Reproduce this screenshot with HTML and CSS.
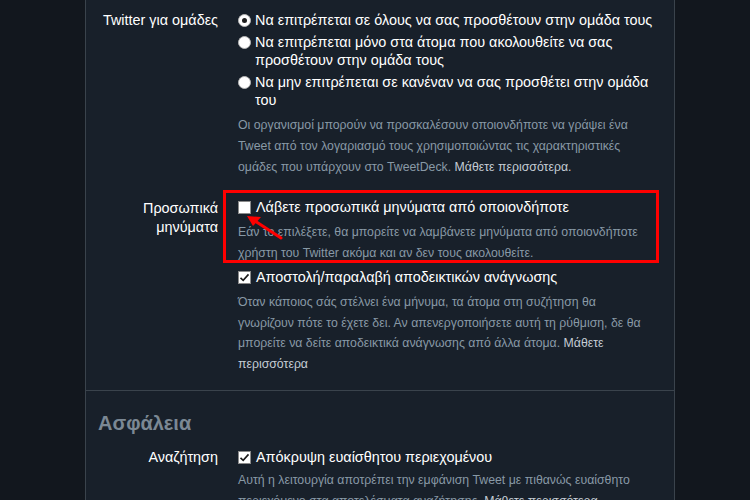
FILE: index.html
```html
<!DOCTYPE html>
<html lang="el">
<head>
<meta charset="utf-8">
<link rel="stylesheet" href="styles.css">
</head>
<body>
<div class="panel">
  <section class="sec first">
    <div class="row">
      <div class="label">Twitter για ομάδες</div>
      <div class="ctrl">
        <div class="opt"><span class="radio on"></span><span class="txt">Να επιτρέπεται σε όλους να σας προσθέτουν στην ομάδα τους</span></div>
        <div class="opt"><span class="radio"></span><span class="txt">Να επιτρέπεται μόνο στα άτομα που ακολουθείτε να σας<br>προσθέτουν στην ομάδα τους</span></div>
        <div class="opt"><span class="radio"></span><span class="txt">Να μην επιτρέπεται σε κανέναν να σας προσθέτει στην ομάδα<br>του</span></div>
        <p class="desc">Οι οργανισμοί μπορούν να προσκαλέσουν οποιονδήποτε να γράψει ένα<br>Tweet από τον λογαριασμό τους χρησιμοποιώντας τις χαρακτηριστικές<br>ομάδες που υπάρχουν στο TweetDeck. <span class="link">Μάθετε περισσότερα.</span></p>
      </div>
    </div>
    <div class="row last">
      <div class="label two">Προσωπικά<br>μηνύματα</div>
      <div class="ctrl">
        <div class="hl">
          <div class="opt"><span class="check"></span><span class="txt">Λάβετε προσωπικά μηνύματα από οποιονδήποτε</span></div>
          <p class="desc">Εάν το επιλέξετε, θα μπορείτε να λαμβάνετε μηνύματα από οποιονδήποτε<br>χρήστη του Twitter ακόμα και αν δεν τους ακολουθείτε.</p>
          <svg class="arrow" width="50" height="40" viewBox="0 0 50 40"><path d="M42 30 L16 13" stroke="#ff0000" stroke-width="3" stroke-linecap="round"/><path d="M8 8 L22 9 L14 18 Z" fill="#ff0000"/></svg>
        </div>
        <div class="opt"><span class="check on"><svg viewBox="0 0 13 13" width="13" height="13"><path d="M2.5 6.8 L5.2 9.4 L10.5 3.4" fill="none" stroke="#1b1b1b" stroke-width="1.6"/></svg></span><span class="txt">Αποστολή/παραλαβή αποδεικτικών ανάγνωσης</span></div>
        <p class="desc tall">Όταν κάποιος σάς στέλνει ένα μήνυμα, τα άτομα στη συζήτηση θα<br>γνωρίζουν πότε το έχετε δει. Αν απενεργοποιήσετε αυτή τη ρύθμιση, δε θα<br>μπορείτε να δείτε αποδεικτικά ανάγνωσης από άλλα άτομα. <span class="link">Μάθετε<br>περισσότερα</span></p>
      </div>
    </div>
  </section>
  <section class="sec">
    <h2 class="head">Ασφάλεια</h2>
    <div class="row">
      <div class="label">Αναζήτηση</div>
      <div class="ctrl">
        <div class="opt"><span class="check on"><svg viewBox="0 0 13 13" width="13" height="13"><path d="M2.5 6.8 L5.2 9.4 L10.5 3.4" fill="none" stroke="#1b1b1b" stroke-width="1.6"/></svg></span><span class="txt">Απόκρυψη ευαίσθητου περιεχομένου</span></div>
        <p class="desc tight">Αυτή η λειτουργία αποτρέπει την εμφάνιση Tweet με πιθανώς ευαίσθητο<br>περιεχόμενο στα αποτελέσματα αναζήτησης. <span class="link">Μάθετε περισσότερα</span></p>
      </div>
    </div>
  </section>
</div>
</body>
</html>
```

FILE: styles.css
```css
html, body {
  margin: 0;
  padding: 0;
  background: #12171e;
  height: 100%;
  overflow: hidden;
}
body {
  font-family: "Liberation Sans", "Noto Sans", sans-serif;
  color: #ffffff;
}
.panel {
  margin-left: 85px;
  width: 588px;
  min-height: 100%;
  background: #18202a;
  border-left: 1px solid #3a434c;
  border-right: 1px solid #3a434c;
}
.sec {
  padding: 0 0 12px 0;
}
.sec.first {
  padding-top: 11px;
  padding-bottom: 15px;
  border-bottom: 1px solid #3a434c;
}
.row {
  display: grid;
  grid-template-columns: 132px 1fr;
  column-gap: 20px;
  margin-bottom: 18px;
}
.row.last {
  margin-bottom: 0;
}
.label {
  text-align: right;
  font-size: 14.4px;
  line-height: 18px;
  white-space: nowrap;
}
.label.two {
  line-height: 19px;
  padding-top: 3px;
}
.ctrl {
  min-width: 0;
}
.opt {
  display: flex;
  align-items: flex-start;
  font-size: 14.4px;
  line-height: 18px;
  margin-bottom: 4px;
  white-space: nowrap;
}
.radio {
  flex: none;
  width: 13px;
  height: 13px;
  border-radius: 50%;
  background: #ffffff;
  margin: 3px 4px 0 0;
  box-sizing: border-box;
  border: 1px solid #b8b8b8;
  position: relative;
}
.radio.on::after {
  content: "";
  position: absolute;
  left: 3px;
  top: 3px;
  width: 5px;
  height: 5px;
  border-radius: 50%;
  background: #1f1f1f;
}
.check {
  flex: none;
  width: 13px;
  height: 13px;
  background: #ffffff;
  border: 1px solid #8a8a8a;
  box-sizing: border-box;
  margin: 3px 5px 0 0;
  position: relative;
  display: block;
}
.check svg {
  position: absolute;
  left: -1px;
  top: -1px;
}
.desc {
  margin: 0;
  padding-top: 2px;
  font-size: 12.3px;
  line-height: 21px;
  color: #8899a6;
  white-space: nowrap;
}
.desc.tall {
  line-height: 20.7px;
}
.desc.tight {
  padding-top: 0;
}
.link {
  color: #c4ccd4;
}
.hl {
  position: relative;
  margin-bottom: 4px;
  padding-top: 2px;
}
.hl::after {
  content: "";
  position: absolute;
  left: -15px;
  top: -6px;
  width: 430px;
  height: 67px;
  border: 3px solid #ff0000;
  pointer-events: none;
}
.arrow {
  position: absolute;
  left: 1px;
  top: 12px;
}
.head {
  margin: 0;
  padding: 20px 0 0 12px;
  font-size: 20px;
  line-height: 24px;
  font-weight: bold;
  color: #7b8894;
  margin-bottom: 13px;
}
```
